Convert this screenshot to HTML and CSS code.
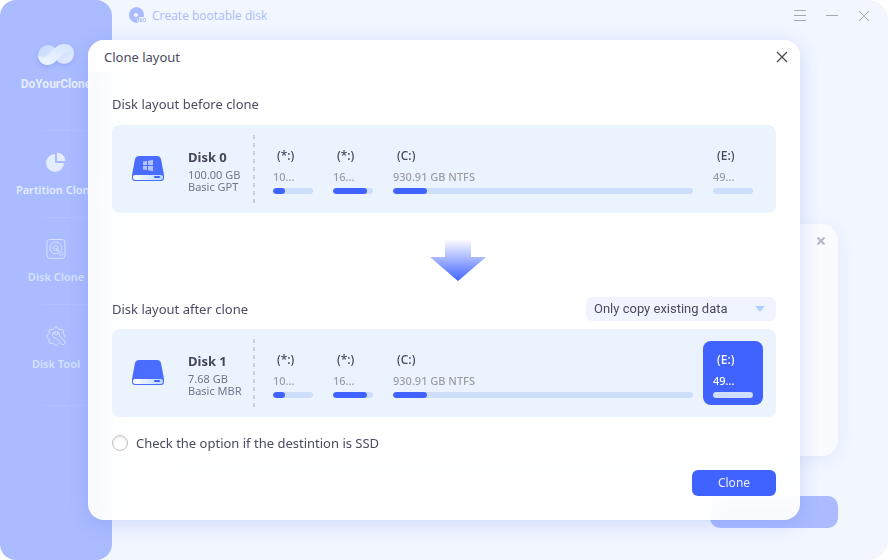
FILE: index.html
```html
<!DOCTYPE html>
<html lang="en">
<head>
<meta charset="utf-8">
<title>DoYourClone</title>
<link rel="stylesheet" href="styles.css">
</head>
<body>
<svg class="defs" aria-hidden="true">
  <defs>
    <linearGradient id="base" x1="0" x2="1" y1="0" y2="0"><stop offset="0" stop-color="#fff"/><stop offset="1" stop-color="#b9d8ff"/></linearGradient>
    <linearGradient id="fall" x1="0" x2="0" y1="0" y2="1"><stop offset="0" stop-color="#fff"/><stop offset="1" stop-color="#4063ff"/></linearGradient>
    <linearGradient id="loopA" x1="0" x2="1" y1="1" y2="0"><stop offset="0" stop-color="#f0f6ff"/><stop offset="1" stop-color="#d3e3ff"/></linearGradient>
    <linearGradient id="loopB" x1="0" x2="1" y1="0" y2="1"><stop offset="0" stop-color="#c3d6ff"/><stop offset="1" stop-color="#e6efff"/></linearGradient>
    <symbol id="drive" viewBox="0 0 32 26">
      <path d="M7 0h18q3 0 4 3l3 16v3q0 3-3 3H3q-3 0-3-3v-3L3 3q1-3 4-3z" fill="#4b6dff"/>
      <path d="M3 19h26q2 0 2 1.500v1q0 2.500-2.500 2.500h-25Q1 24 1 21.500v-1Q1 19 3 19z" fill="url(#base)"/>
      <rect x="22" y="20" width="6" height="2" rx="1" fill="#4063ff"/>
    </symbol>
  </defs>
</svg>
<div class="window">
  <aside class="sidebar">
    <div class="brand">
      <svg class="logo" width="38" height="24" viewBox="0 0 38 24" aria-hidden="true">
        <circle cx="11" cy="12" r="10" fill="url(#loopB)"/>
        <circle cx="27" cy="11" r="10" fill="url(#loopB)"/>
        <path d="M1 12C2 22 10 24 16 20L28 10c4-3 7-2 9 2C38 5 33 1 27 1c-6 0-9 4-14 9-4 5-9 6-12 2z" fill="url(#loopA)"/>
      </svg>
      <span class="brand-name">DoYourClone</span>
    </div>
    <nav class="menu">
      <a class="menu-item active" href="#partition">
        <svg width="20" height="20" viewBox="0 0 20 20" aria-hidden="true"><path d="M9 2v9h9a9 9 0 1 1-9-9z" fill="#e3edff"/><path d="M11 .5A9 9 0 0 1 19.500 9H11z" fill="#e3edff"/></svg>
        <span>Partition Clone</span>
      </a>
      <a class="menu-item" href="#disk">
        <svg width="20" height="20" viewBox="0 0 20 20" fill="none" stroke="#d5e2ff" aria-hidden="true"><rect x="1" y=".5" width="18" height="19" rx="3"/><path d="M12.500 14.200A6 6 0 1 1 15.400 11"/><circle cx="9.500" cy="9" r="2.500"/><path d="M9.500 9l5 7q1 1 2 0t0-2z"/></svg>
        <span>Disk Clone</span>
      </a>
      <a class="menu-item" href="#tool">
        <svg width="20" height="20" viewBox="0 0 20 20" fill="none" stroke="#d5e2ff" stroke-linejoin="round" stroke-linecap="round" aria-hidden="true"><path d="M18.500 11.500q1.500-1.500 0-3L17 7.500l.5-2.500q-.5-2-2.500-1.500l-2 .2L11.500 1.500q-1.500-1.500-3 0L7 3.700l-2.500-.5q-2 .3-1.500 2.300l.3 2L1.300 9q-1.300 1.500 0 3l2 1.300-.3 2.400q0 1.800 2 1.800l2.200-.5L8.700 19q1.300 1 2.600 0l1.200-1.500"/><path d="M9 5.500q-3 1-2.500 4 1 3 4 3l5 5.500q1.500 1.500 3 0t0-3l-5-5q.5-3-2-4.500v3l-1.500.5-1-1z"/></svg>
        <span>Disk Tool</span>
      </a>
    </nav>
  </aside>
  <main class="main">
    <header class="titlebar">
      <a class="boot-link" href="#bootable">
        <svg width="18" height="18" viewBox="0 0 18 18" aria-hidden="true"><path fill-rule="evenodd" d="M8 0a8 8 0 0 1 8 8v2h-4q-3 1-3 4l1 2a8 8 0 1 1-2-16zm0 6a2 2 0 1 0 0 4 2 2 0 0 0 0-4z" fill="#abbbff"/><g fill="none" stroke="#abbbff"><path d="M10.500 11v4M13.500 11.500H12v1.500h1.500v1.500H12"/><rect x="15" y="11.500" width="2.500" height="3" rx="1"/></g></svg>
        <span>Create bootable disk</span>
      </a>
      <div class="controls">
        <button class="icon-button" type="button" aria-label="Menu"><svg width="12" height="12" viewBox="0 0 12 12" stroke="#a6a9b5"><path d="M0 .5h12M0 5.500h12M0 10.500h12"/></svg></button>
        <button class="icon-button" type="button" aria-label="Minimize"><svg width="12" height="12" viewBox="0 0 12 12" stroke="#a6a9b5"><path d="M0 5.500h12"/></svg></button>
        <button class="icon-button" type="button" aria-label="Close window"><svg width="12" height="12" viewBox="0 0 12 12" stroke="#a6a9b5"><path d="M1 1l10 10M11 1L1 11"/></svg></button>
      </div>
    </header>
    <section class="card">
      <button class="icon-button" type="button" aria-label="Remove"><svg width="8" height="8" viewBox="0 0 8 8" stroke="#b3b7c9" stroke-width="2"><path d="M.5.5l7 7M7.500.5l-7 7"/></svg></button>
    </section>
    <button class="next" type="button" aria-label="Next"></button>
  </main>
</div>

<div class="dialog" role="dialog" aria-labelledby="dialog-title">
  <header class="dialog-head">
    <h1 id="dialog-title">Clone layout</h1>
    <button class="icon-button" type="button" aria-label="Close"><svg width="12" height="12" viewBox="0 0 12 12" stroke="#44464d" stroke-width="1.200"><path d="M1 1l10 10M11 1L1 11"/></svg></button>
  </header>
  <div class="dialog-body">
    <h2>Disk layout before clone</h2>
    <section class="disk">
      <div class="disk-icon">
        <svg width="32" height="26" viewBox="0 0 32 26" aria-hidden="true"><use href="#drive"/><path d="M11 5.500l4-.6V9h-4zM16 4.800l5-.8v5h-5zM11 10h4v4.100l-4-.6zM16 10h5v5l-5-.8z" fill="#b7c5ff"/></svg>
      </div>
      <div class="disk-info"><h3>Disk 0</h3><p>100.00 GB</p><p>Basic GPT</p></div>
      <div class="partitions">
        <div class="part"><b>(*:)</b><span>10...</span><div class="bar"><i style="width:30%"></i></div></div>
        <div class="part"><b>(*:)</b><span>16...</span><div class="bar"><i style="width:85%"></i></div></div>
        <div class="part wide"><b>(C:)</b><span>930.91 GB NTFS</span><div class="bar"><i style="width:11.400%"></i></div></div>
        <div class="part"><b>(E:)</b><span>49...</span><div class="bar"></div></div>
      </div>
    </section>
    <svg class="arrow" width="56" height="42" viewBox="0 0 56 42" aria-hidden="true"><path d="M15 0h26v18h15L28 42 0 18h15z" fill="url(#fall)"/></svg>
    <div class="after-row">
      <h2>Disk layout after clone</h2>
      <div class="picker">
        <select aria-label="Copy mode"><option>Only copy existing data</option><option>Sector by sector</option></select>
      </div>
    </div>
    <section class="disk">
      <div class="disk-icon">
        <svg width="32" height="26" viewBox="0 0 32 26" aria-hidden="true"><use href="#drive"/></svg>
      </div>
      <div class="disk-info"><h3>Disk 1</h3><p>7.68 GB</p><p>Basic MBR</p></div>
      <div class="partitions">
        <div class="part"><b>(*:)</b><span>10...</span><div class="bar"><i style="width:30%"></i></div></div>
        <div class="part"><b>(*:)</b><span>16...</span><div class="bar"><i style="width:85%"></i></div></div>
        <div class="part wide"><b>(C:)</b><span>930.91 GB NTFS</span><div class="bar"><i style="width:11.400%"></i></div></div>
        <div class="part selected"><b>(E:)</b><span>49...</span><div class="bar"></div></div>
      </div>
    </section>
    <label class="ssd"><input type="checkbox"><span>Check the option if the destintion is SSD</span></label>
    <button class="primary" type="button">Clone</button>
  </div>
</div>
</body>
</html>
```
FILE: styles.css
```css
* { box-sizing: border-box; }

body {
  margin: 0;
  background: #fff;
  color: #4a4a60;
  font: 13px/20px "Noto Sans", "Open Sans", sans-serif;
}

h1, h2, h3, p { margin: 0; font-size: 13px; font-weight: 400; }
a { color: inherit; text-decoration: none; }
button { font: inherit; border: 0; padding: 0; background: none; }
svg { display: block; }
.defs { position: absolute; width: 0; height: 0; }

.window {
  display: flex;
  min-height: 100vh;
  border-radius: 20px;
  background: #f1f6ff;
}

.sidebar {
  width: 112px;
  border-radius: 16px;
  background: #abbbff;
  color: #e0eaff;
  text-align: center;
}

.brand {
  display: flex;
  flex-direction: column;
  align-items: center;
  gap: 8px;
  height: 130px;
  padding-top: 43px;
}
.logo { filter: drop-shadow(0 2px 2px #94a8f8); }
.brand-name { font: bold 12px/18px Roboto, sans-serif; color: #e6eeff; }

.menu {
  padding-bottom: 1px;
  background: linear-gradient(90deg, transparent 30%, #b3c2ff 50%, transparent) bottom / 100% 1px no-repeat;
}
.menu-item {
  display: flex;
  flex-direction: column;
  align-items: center;
  gap: 8px;
  height: 87px;
  padding-top: 22px;
  background: linear-gradient(90deg, transparent 30%, #b3c2ff 50%, transparent) top / 100% 1px no-repeat;
  font-size: 11px;
  font-weight: 600;
  white-space: nowrap;
  color: #d5e2ff;
}
.menu-item.active { color: #e3edff; }
.menu-item:last-child { height: 101px; }

.main {
  flex: 1;
  display: flex;
  flex-direction: column;
}

.titlebar {
  display: flex;
  align-items: center;
  justify-content: space-between;
  height: 32px;
  padding: 0 16px;
}
.boot-link {
  display: flex;
  align-items: center;
  gap: 6px;
  color: #abbbff;
  font-family: "Open Sans", sans-serif;
  font-size: 12px;
}
.controls { display: flex; gap: 16px; }
.icon-button {
  display: grid;
  place-items: center;
  width: 16px;
  height: 16px;
}

.card {
  display: flex;
  justify-content: flex-end;
  height: 232px;
  margin: 192px 50px 40px;
  padding: 9px;
  border-radius: 16px;
  background: #fafbff;
  box-shadow: 0 4px 16px rgba(120, 150, 230, .12);
}
.next {
  align-self: flex-end;
  width: 128px;
  height: 32px;
  margin-right: 50px;
  border-radius: 10px;
  background: #abbbff;
}

.dialog {
  position: absolute;
  inset: 40px 88px;
  display: flex;
  flex-direction: column;
  border-radius: 16px;
  background: rgba(255, 255, 255, .94);
  box-shadow: 0 4px 20px rgba(65, 99, 225, .2);
  backdrop-filter: blur(8px);
}
.dialog-head {
  display: flex;
  align-items: center;
  justify-content: space-between;
  height: 32px;
  padding: 2px 10px 0 16px;
  border-radius: 16px 16px 0 0;
  background: #fff;
}
.dialog-body {
  display: flex;
  flex-direction: column;
  padding: 22px 24px 24px;
}

.disk {
  display: flex;
  align-items: center;
  height: 88px;
  margin-top: 8px;
  padding: 0 13px 0 20px;
  border-radius: 8px;
  background: #ebf3fe;
}
h2 + .disk { margin-top: 11px; }
.disk-icon { width: 56px; }
.disk-info {
  width: 65px;
  padding-top: 2px;
  white-space: nowrap;
  color: #73758a;
}
.disk-info h3 {
  margin-bottom: 2px;
  font-weight: 700;
  line-height: 20px;
  color: #46465c;
}
.disk-info p { font-size: 11px; line-height: 12px; }

.partitions {
  flex: 1;
  display: flex;
  align-items: center;
  height: 68px;
  padding-left: 10px;
  background: repeating-linear-gradient(#c9d0dc 0 4px, transparent 4px 8px) 0 0 / 2px 100% no-repeat;
}
.part {
  width: 60px;
  height: 64px;
  padding: 9px 10px 0;
  border-radius: 8px;
  color: #9c9da3;
}
.part.wide { flex: 1; }
.part b {
  display: block;
  padding-left: 4px;
  font-size: 12px;
  font-weight: 500;
  line-height: 20px;
  color: #46465c;
}
.part span {
  display: block;
  margin-bottom: 0;
  font-size: 11px;
  font-weight: 500;
  line-height: 22px;
}
.bar {
  height: 6px;
  overflow: hidden;
  border-radius: 3px;
  background: #cedefb;
}
.bar i {
  display: block;
  height: 6px;
  border-radius: 3px;
  background: #4063ff;
}
.selected { background: #4063ff; }
.selected b, .selected span { color: #fff; }

.arrow { align-self: center; margin: 26px 0 16px 28px; }

.after-row {
  display: flex;
  align-items: center;
  justify-content: space-between;
}
.picker {
  position: relative;
  width: 190px;
  height: 24px;
}
.picker select {
  appearance: none;
  width: 100%;
  height: 24px;
  padding: 0 8px;
  border: 0;
  border-radius: 6px;
  background: #f0f4ff;
  color: #4a4a60;
  font: 13px/24px Roboto, sans-serif;
}
.picker::after {
  content: "";
  position: absolute;
  top: 9px;
  right: 11px;
  border: 5px solid transparent;
  border-top: 6px solid #b3cdff;
  border-bottom: 0;
  pointer-events: none;
}

.ssd {
  display: flex;
  align-items: center;
  gap: 8px;
  margin-top: 16px;
}
.ssd input {
  appearance: none;
  width: 16px;
  height: 16px;
  margin: 0;
  border: 1px solid #c2c2c8;
  border-radius: 8px;
  background: #fff;
  box-shadow: inset 0 1px 2px rgba(0, 0, 0, .12);
}
.primary {
  align-self: flex-end;
  width: 84px;
  height: 26px;
  margin-top: 17px;
  border-radius: 6px;
  background: #4063ff;
  color: #e8edff;
  font-size: 12px;
}
```
